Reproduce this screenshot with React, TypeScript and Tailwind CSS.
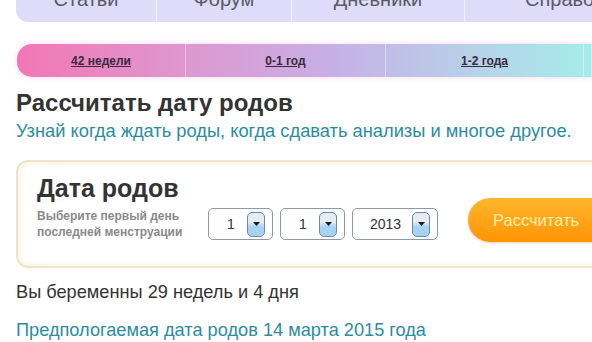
import React from 'react';

const NAV = [
    { label: 'Статьи', w: 'w-[141px]' },
    { label: 'Форум', w: 'w-[135px]' },
    { label: 'Дневники', w: 'w-[173px]' },
    { label: 'Справочник', w: 'flex-1' },
];

const TIMELINE = [
    { label: '42 недели', w: 'w-[169px]' },
    { label: '0-1 год', w: 'w-[200px]' },
    { label: '1-2 года', w: 'w-[198px]' },
    { label: '', w: 'flex-1' },
];

const DateSelect = ({ value, wide }: { value: string; wide?: boolean }) => (
    <div className={`flex items-center h-[32px] border border-[#8c98a4] rounded-[5px] bg-white pl-[6px] pr-[7px] ${wide ? 'w-[86px]' : 'w-[65px]'}`}>
        <span className="flex-1 text-center text-[14px] text-[#333]">{value}</span>
        <span className="flex items-center justify-center w-[18px] h-[25px] rounded-[5px] border border-[#6f87a2] bg-gradient-to-b from-[#e4edf4] from-40% to-[#a6d2f4] to-60%">
            <svg width="7" height="4" viewBox="0 0 7 4"><path d="M0 0h7L3.5 4z" fill="#1a1a1a" /></svg>
        </span>
    </div>
);

const App = () => {
    return (
        <div className="w-[592px] h-[342px] overflow-hidden bg-white font-['Liberation_Sans',Arial,sans-serif]">
            {/* top nav, cut off at the top of the shot */}
            <div className="ml-[16px] w-[680px] h-[22px] flex bg-[#dedcf8] rounded-bl-[12px] overflow-hidden">
                {NAV.map(n => (
                    <div key={n.label} className={`${n.w} flex justify-center border-r border-[#f0f0fc]`}>
                        <span className="-mt-[13px] text-[20px] leading-[24px] text-[#5a5a66]">{n.label}</span>
                    </div>
                ))}
            </div>

            {/* age timeline */}
            <div className="ml-[17px] mt-[22px] h-[33px] flex rounded-l-[15px] overflow-hidden bg-gradient-to-r from-[#f276b6] via-[#c6b0e6] via-55% to-[#a4ecea] shadow-[0_0_6px_rgba(240,140,200,0.35)]">
                {TIMELINE.map((t, i) => (
                    <div key={i} className={`${t.w} flex items-center justify-center border-r border-white/40`}>
                        {t.label && (
                            <span className="text-[12px] font-bold underline text-[#3a2a3e]">{t.label}</span>
                        )}
                    </div>
                ))}
            </div>

            <div className="px-[16px] pt-[12px]">
                <h1 className="text-[24px] leading-[28px] font-bold text-[#333]">Рассчитать дату родов</h1>
                <p className="mt-[3px] text-[18.3px] leading-[22px] text-[#2c8c9f] whitespace-nowrap">
                    Узнай когда ждать роды, когда сдавать анализы и многое другое.
                </p>
            </div>

            {/* calculator card */}
            <div className="ml-[16px] mt-[18px] w-[600px] h-[108px] border-2 border-[#efe4c4] rounded-[12px] bg-white shadow-[inset_0_0_6px_rgba(230,215,170,0.5)] flex items-start pl-[19px]">
                <div className="w-[171px] pt-[11px]">
                    <div className="text-[25px] leading-[30px] font-bold text-[#333]">Дата родов</div>
                    <div className="mt-[5px] text-[12px] leading-[16px] font-bold text-[#8a8a8a] whitespace-nowrap">
                        Выберите первый день<br />последней менструации
                    </div>
                </div>
                <div className="flex gap-[7px] pt-[46px]">
                    <DateSelect value="1" />
                    <DateSelect value="1" />
                    <DateSelect value="2013" wide />
                </div>
                <div className="pt-[36px] ml-[30px]">
                    <button className="h-[44px] w-[140px] rounded-l-full bg-gradient-to-b from-[#ffb62a] to-[#ff9400] text-[16.5px] text-[#fff2a6] text-left pl-[25px] shadow-[0_1px_3px_rgba(200,120,0,0.3)]">
                        Рассчитать
                    </button>
                </div>
            </div>

            <div className="px-[16px] text-[18.2px] leading-[22px]">
                <p className="mt-[13px] text-[#333]">Вы беременны 29 недель и 4 дня</p>
                <p className="mt-[16px] text-[#2c8c9f]">Предпологаемая дата родов 14 марта 2015 года</p>
            </div>
        </div>
    );
};

export default App;
